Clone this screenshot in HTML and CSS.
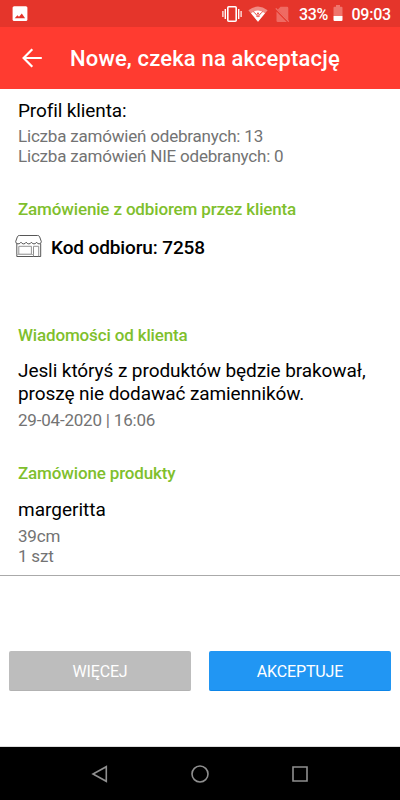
FILE: index.html
```html
<!DOCTYPE html>
<html lang="pl">
<head>
<meta charset="utf-8">
<title>Nowe, czeka na akceptację</title>
<link rel="stylesheet" href="styles.css">
</head>
<body>
<div class="screen">
  <div class="status">
    <svg class="photo" width="16" height="16" viewBox="0 0 16 16"><rect x=".6" y=".2" width="14.8" height="14.8" rx="1.6" fill="#fff"/><path d="M2.7 12.2 5.4 9.200l1.600 1.600 2.800-3.200 3.300 4.600z" fill="#e5352b"/></svg>
    <svg class="vibrate" width="20" height="18" viewBox="0 0 20 18"><g fill="none" stroke="#fff"><rect x="5.8" y="1.8" width="8.4" height="14.4" rx="1" stroke-width="1.6"/><path d="M3.3 4v10M16.7 4v10" stroke-width="1.4"/><path d="M.9 6v6M19.1 6v6" stroke-width="1.2"/></g></svg>
    <svg class="wifi" width="20" height="16" viewBox="0 0 20 16"><path d="M.4 4.2Q10-3.2 19.6 4.2L10 15.8z" fill="#f08b84"/><path d="M3 7.2Q10 1.600 17 7.200L10 15.800z" fill="#fff"/><path d="M5.200 5.600 8 8.100M14.800 5.600 12 8.100M7.600 8.200Q10 10.800 12.400 8.200M8 9.800Q10 12 12 9.800" fill="none" stroke="#e5352b" stroke-width=".8"/><circle cx="10" cy="7.500" r=".9" fill="#e5352b"/></svg>
    <svg class="sim" width="15" height="17" viewBox="0 0 15 17"><path d="M5.500.8H12q1.300 0 1.300 1.300v12.700L2.800 3.600z M1.500 5.500 11.800 16H2.800q-1.300 0-1.300-1.300z" fill="#ef6a62"/><path d="m.8 2.400 13 13.200" stroke="#ef756d" stroke-width="1.200"/></svg>
    <span class="percent">33%</span>
    <svg class="battery" width="10" height="17" viewBox="0 0 10 17"><path d="M3 0h4v1.700h1.500q1 0 1 1V11H.5V2.700q0-1 1-1H3z" fill="#ef756d"/><path d="M.5 11h9v4q0 1-1 1h-7q-1 0-1-1z" fill="#fff"/></svg>
    <span class="clock">09:03</span>
  </div>
  <header class="appbar">
    <svg class="back" width="20" height="20" viewBox="0 0 20 20"><path d="M10.300 1.200 1.600 10l8.700 8.800M1.600 10H19.800" fill="none" stroke="#fff" stroke-width="2.200"/></svg>
    <h1 class="title">Nowe, czeka na akceptację</h1>
  </header>
  <main class="content">
    <h2 class="lead profile">Profil klienta:</h2>
    <div class="muted stats">Liczba zamówień odebranych: 13<br>Liczba zamówień NIE odebranych: 0</div>
    <h3 class="section pickup">Zamówienie z odbiorem przez klienta</h3>
    <div class="code">
      <svg class="shop" width="27" height="24" viewBox="0 0 27 24"><g fill="none" stroke="#444" stroke-width=".9"><path d="M4.400 1.500h18.200q1.500 0 2 1.200l1.700 4.800q0 2.400-2.200 2.400-1.700 0-2.500-1.700-.9 1.700-2.600 1.700t-2.600-1.700q-.9 1.700-2.600 1.700t-2.600-1.700q-.9 1.700-2.600 1.700T6 8.200Q5.100 9.900 3 9.900.7 9.900.7 7.500L2.400 2.700q.5-1.200 2-1.200z"/><path d="M1.800 9.800v12.700h23.900V9.800"/><path d="M3.800 12.300h12.600v7.900H3.800zM18.500 22.500V12.300h5.200v10.200M18.500 16.500v3" stroke="#888"/><path d="M1.500 20.500h17" stroke="#aaa"/></g></svg>
      <strong class="code-text">Kod odbioru: 7258</strong>
    </div>
    <h3 class="section messages">Wiadomości od klienta</h3>
    <p class="message">Jesli któryś z produktów będzie brakował, proszę nie dodawać zamienników.</p>
    <div class="muted date">29-04-2020 | 16:06</div>
    <h3 class="section products">Zamówione produkty</h3>
    <div class="lead product">margeritta</div>
    <div class="muted details">39cm<br>1 szt</div>
  </main>
  <div class="actions">
    <button class="button more">WIĘCEJ</button>
    <button class="button accept">AKCEPTUJE</button>
  </div>
  <nav class="navbar">
    <svg width="18" height="18" viewBox="0 0 18 18"><path d="M15.300 1.700v14.600L2 9z"/></svg>
    <svg width="18" height="18" viewBox="0 0 18 18"><circle cx="9" cy="9" r="8"/></svg>
    <svg width="18" height="18" viewBox="0 0 18 18"><path d="M2 2h14v14H2z"/></svg>
  </nav>
</div>
</body>
</html>
```
FILE: styles.css
```css
* { box-sizing: border-box; }
body { margin: 0; background: #fff; font-family: Roboto, sans-serif; color: #000; }
h1, h2, h3, p { margin: 0; }
svg { display: block; flex: none; }
.screen { width: 400px; height: 800px; display: flex; flex-direction: column; }
.status { height: 27px; background: #e5352b; display: flex; align-items: center; padding: 1px 9px 0 12px; color: #fff; font-size: 16px; font-weight: 500; }
.photo { margin-top: -1px; }
.vibrate { margin: -1px 0 0 194px; }
.wifi { margin-left: 6px; }
.sim { margin-left: 7px; }
.percent { margin-left: 9px; width: 29px; letter-spacing: -0.3px; }
.battery { margin: -1px 0 0 5px; }
.clock { margin-left: auto; letter-spacing: -0.2px; }
.appbar { height: 62px; background: #ff3b30; display: flex; align-items: center; padding-left: 22px; color: #fff; }
.title { margin: 2px 0 0 28px; font-size: 22px; letter-spacing: 0.16px; font-weight: 500; line-height: 26px; white-space: nowrap; }
.content { height: 487px; padding: 10px 16px 0 18px; border-bottom: 1px solid #aaa; }
.lead { font-size: 19px; font-weight: 400; line-height: 24px; }
.profile { letter-spacing: -0.12px; }
.muted { font-size: 17px; line-height: 20px; letter-spacing: -0.2px; color: #737373; }
.stats { margin-top: 3px; }
.section { font-size: 17px; font-weight: 500; line-height: 20px; letter-spacing: -0.15px; color: #7fbf2d; }
.pickup { margin-top: 33px; }
.code { display: flex; align-items: center; height: 26px; margin: 14px 0 0 -3px; }
.code-text { margin: 2px 0 0 9px; font-size: 19px; letter-spacing: -0.12px; font-weight: 500; }
.messages { margin-top: 66px; }
.message { margin-top: 14px; font-size: 19px; line-height: 23px; letter-spacing: -0.08px; }
.date { margin-top: 5px; }
.products { margin-top: 33px; }
.product { margin-top: 15px; }
.details { margin-top: 4px; }
.actions { height: 171px; padding: 75px 9px 0; display: flex; gap: 18px; }
.button { flex: 1; height: 40px; border: 0; padding: 1px 0 0; border-radius: 2px; font: 400 16px Roboto, sans-serif; letter-spacing: -0.15px; color: #fff; }
.more { background: #bdbdbd; border-bottom: 1px solid #b2b2b2; }
.accept { background: #2196f3; border-bottom: 1px solid #0c85e8; }
.content { flex: none; height: 487px; }
.actions { flex: none; }
.navbar { flex: none; height: 53px; background: #000; box-shadow: 0 -1px #ddd; display: flex; justify-content: center; align-items: center; gap: 82px; }
.navbar path, .navbar circle { fill: none; stroke: #8f8f8f; stroke-width: 1.6; }
```
